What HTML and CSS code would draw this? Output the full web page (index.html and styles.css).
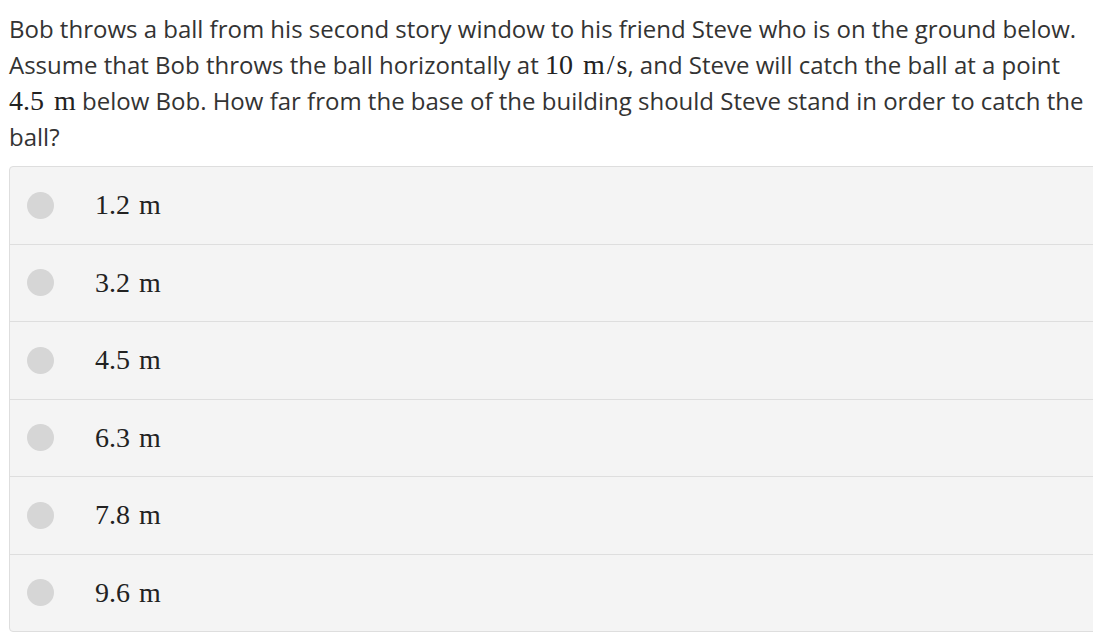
FILE: index.html
```html
<!DOCTYPE html>
<html>
<head>
<meta charset="utf-8">
<link rel="stylesheet" href="styles.css">
</head>
<body>
<div class="page">
  <p class="question">Bob throws a ball from his second story window to his friend Steve who is on the ground below. Assume that Bob throws the ball horizontally at <span class="math">10&nbsp;m<span class="slash">/</span>s</span>, and Steve will catch the ball at a point <span class="math">4.5&nbsp;m</span> below Bob. How far from the base of the building should Steve stand in order to catch the ball?</p>
  <div class="choices">
    <div class="choice"><span class="radio"></span><span class="label">1.2&nbsp;m</span></div>
    <div class="choice"><span class="radio"></span><span class="label">3.2&nbsp;m</span></div>
    <div class="choice"><span class="radio"></span><span class="label">4.5&nbsp;m</span></div>
    <div class="choice"><span class="radio"></span><span class="label">6.3&nbsp;m</span></div>
    <div class="choice"><span class="radio"></span><span class="label">7.8&nbsp;m</span></div>
    <div class="choice"><span class="radio"></span><span class="label">9.6&nbsp;m</span></div>
  </div>
</div>
</body>
</html>
```
FILE: styles.css
```css
html, body {
  margin: 0;
  padding: 0;
  background: #fff;
  overflow: hidden;
}
.page {
  padding: 11px 0 0 9px;
  width: 1100px;
  font-family: "Open Sans", sans-serif;
  color: #333;
}
.question {
  margin: 0 0 11px 0;
  width: 1082px;
  font-size: 24px;
  line-height: 36px;
}
.math {
  font-family: "Liberation Serif", serif;
  font-size: 28px;
  line-height: 20px;
  word-spacing: 3px;
  color: #222;
}
.slash {
  padding: 0 2px;
}
.choices {
  background: #f4f4f4;
  border: 1px solid #dedede;
  border-radius: 4px;
  width: 1110px;
}
.choice {
  display: flex;
  align-items: center;
  height: 76.5px;
  border-top: 1px solid #dedede;
  padding-left: 17px;
}
.choice:first-child {
  border-top: none;
}
.radio {
  width: 27px;
  height: 27px;
  border-radius: 50%;
  background: #d6d6d6;
  flex: none;
}
.label {
  margin-left: 41px;
  font-family: "Liberation Serif", serif;
  font-size: 28px;
  word-spacing: 2px;
  color: #222;
}
```
